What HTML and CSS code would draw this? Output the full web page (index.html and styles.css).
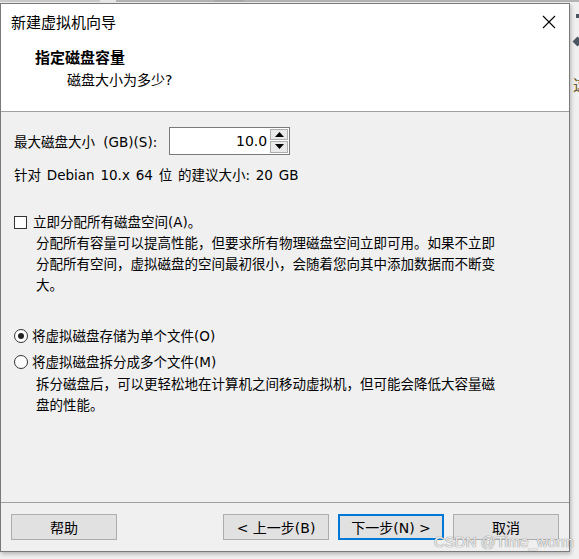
FILE: index.html
```html
<!DOCTYPE html>
<html lang="zh-CN">
<head>
<meta charset="utf-8">
<title>新建虚拟机向导</title>
<link rel="stylesheet" href="styles.css">
</head>
<body>
<div class="desktop">
  <div class="topstrip"><span class="seg-a"></span><span class="seg-b"></span><span class="seg-c"></span></div>
  <div class="side-deco">
    <span class="sq"></span>
    <span class="dia"></span>
    <span class="ch">这</span>
  </div>
  <div class="window">
    <div class="titlebar">
      <span class="title">新建虚拟机向导</span>
      <svg class="close" width="14" height="14" viewBox="0 0 14 14"><path d="M1 1L13 13M13 1L1 13" stroke="#000" stroke-width="1.1" fill="none"/></svg>
    </div>
    <div class="header">
      <div class="h-title">指定磁盘容量</div>
      <div class="h-sub">磁盘大小为多少?</div>
    </div>
    <div class="body">
      <div class="size-row">
        <span class="size-label">最大磁盘大小 (GB)(S):</span>
        <div class="spin">
          <span class="spin-val">10.0</span>
          <div class="spin-btns">
            <span class="sb"><svg width="9" height="5" viewBox="0 0 9 5"><path d="M4.5 0L9 5H0Z" fill="#000"/></svg></span>
            <span class="sb"><svg width="9" height="5" viewBox="0 0 9 5"><path d="M0 0H9L4.5 5Z" fill="#000"/></svg></span>
          </div>
        </div>
      </div>
      <div class="rec">针对 Debian 10.x 64 位 的建议大小: 20 GB</div>
      <label class="opt check-opt"><span class="checkbox"></span><span>立即分配所有磁盘空间(A)。</span></label>
      <p class="desc">分配所有容量可以提高性能，但要求所有物理磁盘空间立即可用。如果不立即分配所有空间，虚拟磁盘的空间最初很小，会随着您向其中添加数据而不断变大。</p>
      <label class="opt radio-opt first"><span class="radio on"></span><span>将虚拟磁盘存储为单个文件(O)</span></label>
      <label class="opt radio-opt"><span class="radio"></span><span>将虚拟磁盘拆分成多个文件(M)</span></label>
      <p class="desc">拆分磁盘后，可以更轻松地在计算机之间移动虚拟机，但可能会降低大容量磁盘的性能。</p>
    </div>
    <div class="footer">
      <button class="btn">帮助</button>
      <div class="spacer"></div>
      <button class="btn">&lt; 上一步(B)</button>
      <button class="btn focus">下一步(N) &gt;</button>
      <button class="btn">取消</button>
    </div>
  </div>
  <div class="watermark">CSDN @Time_worm</div>
</div>
</body>
</html>
```

FILE: styles.css
```css
html, body {
  margin: 0;
  padding: 0;
}
body {
  width: 579px;
  height: 559px;
  overflow: hidden;
  background: #f0f0f0;
  font-family: "DejaVu Sans", "Noto Sans CJK SC", sans-serif;
  color: #000;
}
.desktop {
  position: relative;
  width: 579px;
  height: 559px;
}
.topstrip {
  display: flex;
  height: 2px;
  background: #b4b4b4;
}
.topstrip .seg-a { width: 100px; background: #c8c8c8; }
.topstrip .seg-b { width: 16px; background: #e6e6e6; }
.topstrip .seg-c { width: 30px; margin-left: 98px; background: #a8a8a8; }
.side-deco .sq {
  position: absolute; left: 576px; top: 14px; width: 4px; height: 4px; background: #4a5562;
}
.side-deco .dia {
  position: absolute; left: 574px; top: 38px; width: 7px; height: 7px; background: #4a5562; transform: rotate(45deg);
}
.side-deco .ch {
  position: absolute; left: 573px; top: 74px; font-size: 16px; color: #6b5a2a; line-height: 20px;
  font-family: "Noto Sans CJK SC", sans-serif;
}
.window {
  width: 568px;
  margin-top: 1px;
  border: 1px solid #7a7a7a;
  background: #f0f0f0;
  box-shadow: 1px 2px 4px rgba(0,0,0,0.25);
}
.titlebar {
  height: 38px;
  background: #fff;
  display: flex;
  align-items: center;
  justify-content: space-between;
  padding: 0 13px 0 10px;
}
.title {
  font-size: 15px;
  line-height: 20px;
}
.close { display: block; margin-top: -2px; }
.header {
  background: #fff;
  height: 70px;
  border-bottom: 1px solid #a0a0a0;
  box-sizing: border-box;
  padding: 5px 0 0 34px;
}
.h-title {
  font-size: 15px;
  font-weight: bold;
  line-height: 22px;
}
.h-sub {
  font-size: 14px;
  line-height: 22px;
  padding-left: 32px;
}
.body {
  height: 391px;
  box-sizing: border-box;
  padding: 14px 0 0 13px;
  font-size: 13.5px;
  border-bottom: 1px solid #a0a0a0;
}
.size-row {
  display: flex;
  align-items: center;
  gap: 12px;
  height: 29px;
}
.size-label { word-spacing: 4px; }
.spin {
  display: flex;
  width: 121px;
  height: 28px;
  border: 1px solid #7a7a7a;
  background: #fff;
  box-sizing: border-box;
}
.spin-val {
  flex: 1;
  text-align: right;
  font-size: 14px;
  line-height: 26px;
  padding-right: 3px;
}
.spin-btns {
  display: flex;
  flex-direction: column;
  width: 18px;
  padding: 1px 1px 1px 0;
  gap: 1px;
}
.sb {
  flex: 1;
  background: #e9e9e9;
  border: 1px solid #adadad;
  display: flex;
  align-items: center;
  justify-content: center;
}
.sb svg { display: block; }
.rec {
  margin-top: 10px;
  line-height: 20px;
  word-spacing: 1.5px;
}
.opt {
  display: flex;
  align-items: center;
  gap: 6px;
  line-height: 20px;
}
.check-opt { margin-top: 27px; }
.checkbox {
  width: 13px;
  height: 13px;
  border: 1px solid #333;
  background: #fff;
  box-sizing: border-box;
}
.desc {
  margin: 1px 70px 0 22px;
  line-height: 21px;
}
.radio-opt.first { margin-top: 30px; }
.radio-opt { margin-top: 6px; gap: 4px; }
.radio {
  width: 14px;
  height: 14px;
  border: 1px solid #333;
  border-radius: 50%;
  background: #fff;
  box-sizing: border-box;
  position: relative;
}
.radio.on::after {
  content: "";
  position: absolute;
  left: 3px; top: 3px;
  width: 6px; height: 6px;
  border-radius: 50%;
  background: #222;
}
.radio-opt + .desc { margin-top: 2px; }
.footer {
  display: flex;
  align-items: center;
  gap: 9px;
  height: 48px;
  padding: 0 10px;
}
.spacer { flex: 1; }
.btn {
  width: 106px;
  height: 26px;
  border: 1px solid #adadad;
  background: #e1e1e1;
  font-family: inherit;
  font-size: 14px;
  color: #000;
  padding: 0;
}
.btn.focus {
  border: 2px solid #0078d7;
}
.watermark {
  position: absolute;
  left: 434px;
  top: 533px;
  font-family: "Liberation Sans", Arial, sans-serif;
  font-size: 15px;
  color: rgba(255,255,255,0.85);
  text-shadow: 0 0 1px #888, 0 0 1px #888;
}
```
